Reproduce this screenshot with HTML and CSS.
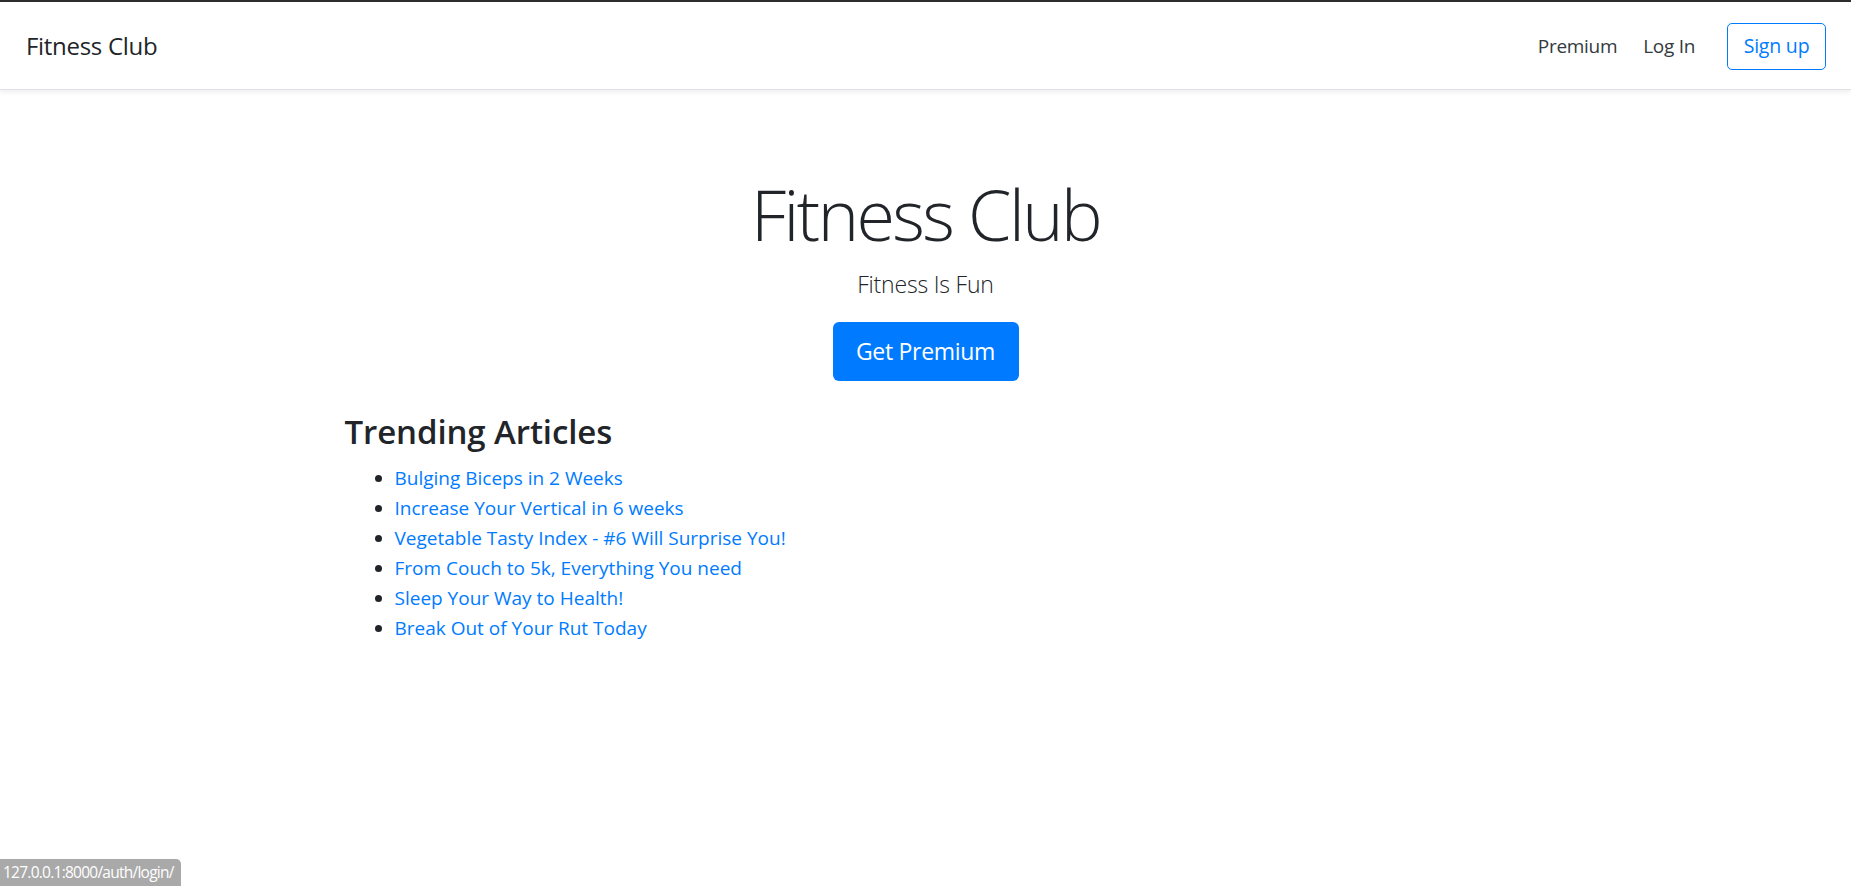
FILE: index.html
```html
<!DOCTYPE html>
<html lang="en">
<head>
<meta charset="utf-8">
<title>Fitness Club</title>
<link rel="stylesheet" href="styles.css">
</head>
<body>
<div class="frame-top"></div>
<header class="topbar">
  <h5 class="brand">Fitness Club</h5>
  <nav class="nav">
    <a class="nav-link" href="#">Premium</a>
    <a class="nav-link" href="#">Log In</a>
  </nav>
  <a class="btn-outline" href="#">Sign up</a>
</header>
<section class="hero">
  <h1 class="display">Fitness Club</h1>
  <p class="lead">Fitness Is Fun</p>
  <a class="btn-primary" href="#">Get Premium</a>
</section>
<main class="container">
  <h3 class="section-title">Trending Articles</h3>
  <ul class="articles">
    <li><a href="#">Bulging Biceps in 2 Weeks</a></li>
    <li><a href="#">Increase Your Vertical in 6 weeks</a></li>
    <li><a href="#">Vegetable Tasty Index - #6 Will Surprise You!</a></li>
    <li><a href="#">From Couch to 5k, Everything You need</a></li>
    <li><a href="#">Sleep Your Way to Health!</a></li>
    <li><a href="#">Break Out of Your Rut Today</a></li>
  </ul>
</main>
<div class="status-bubble">127.0.0.1:8000/auth/login/</div>
</body>
</html>
```

FILE: styles.css
```css
html, body {
  margin: 0;
  padding: 0;
  background: #fff;
}
body {
  font-family: "Open Sans", "Noto Sans", sans-serif;
  color: #212529;
  font-size: 20px;
  line-height: 1.5;
}
a { text-decoration: none; }

.frame-top {
  height: 2px;
  background: #2e2e2e;
}

.topbar {
  height: 88px;
  box-sizing: border-box;
  display: flex;
  align-items: center;
  padding: 2px 25px 0 26px;
  background: #fff;
  border-bottom: 1px solid #dee2e6;
  box-shadow: 0 2px 5px rgba(0,0,0,0.075);
  position: relative;
}
.brand {
  margin: 0 auto 0 0;
  font-size: 24px;
  font-weight: 400;
  letter-spacing: -0.3px;
  color: #212529;
  line-height: 1.2;
}
.nav {
  display: flex;
  margin-right: 19px;
}
.nav-link {
  padding: 10px 13px;
  color: #343a40;
  font-size: 19px;
  letter-spacing: -0.3px;
}
.btn-outline {
  display: inline-block;
  box-sizing: border-box;
  height: 47px;
  width: 99px;
  border: 1px solid #007bff;
  border-radius: 5px;
  color: #007bff;
  font-size: 19.5px;
  letter-spacing: -0.2px;
  text-align: center;
  line-height: 44px;
}

.hero {
  padding: 82px 16px 30px;
  text-align: center;
}
.display {
  margin: 0 0 10px;
  font-size: 70px;
  font-weight: 300;
  line-height: 84px;
  letter-spacing: -2.55px;
  color: #212529;
}
.lead {
  margin: 0 0 19px;
  font-size: 23px;
  font-weight: 300;
  line-height: 37px;
  letter-spacing: -0.2px;
}
.btn-primary {
  display: inline-block;
  box-sizing: border-box;
  width: 186px;
  height: 59px;
  line-height: 59px;
  border-radius: 6px;
  background: #007bff;
  color: #fff;
  font-size: 23px;
  letter-spacing: -0.3px;
}

.container {
  width: 1162px;
  margin: 0 auto;
  padding: 0 19px;
  box-sizing: content-box;
}
.section-title {
  margin: 0 0 10px;
  font-size: 33px;
  font-weight: 600;
  line-height: 42px;
  letter-spacing: -0.1px;
}
.articles {
  margin: 0;
  padding-left: 50px;
}
.articles li {
  line-height: 30px;
  font-size: 19px;
}
.articles a {
  color: #007bff;
  letter-spacing: 0;
}

.status-bubble {
  position: fixed;
  left: 0;
  bottom: 0;
  height: 27px;
  padding: 0 7px 0 3px;
  background: #a9a9a9;
  color: #fff;
  font-size: 15.5px;
  line-height: 27px;
  border-top-right-radius: 5px;
  letter-spacing: -0.75px;
}
```
